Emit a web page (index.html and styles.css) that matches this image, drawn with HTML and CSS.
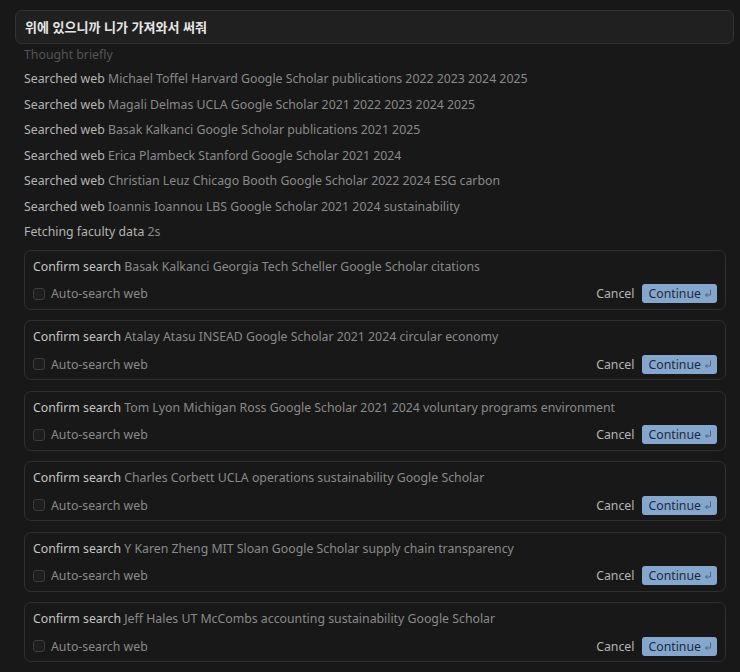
FILE: index.html
```html
<!DOCTYPE html>
<html lang="ko">
<head>
  <meta charset="UTF-8" />
  <meta name="viewport" content="width=device-width, initial-scale=1.0"/>
  <title>Agent log</title>
  <link rel="stylesheet" href="styles.css">
</head>
<body>

  <div class="chat">
    <div class="prompt">위에 있으니까 니가 가져와서 써줘</div>

    <div class="steps">
      <div class="step dim">Thought briefly</div>
      <div class="step"><b>Searched web</b> Michael Toffel Harvard Google Scholar publications 2022 2023 2024 2025</div>
      <div class="step"><b>Searched web</b> Magali Delmas UCLA Google Scholar 2021 2022 2023 2024 2025</div>
      <div class="step"><b>Searched web</b> Basak Kalkanci Google Scholar publications 2021 2025</div>
      <div class="step"><b>Searched web</b> Erica Plambeck Stanford Google Scholar 2021 2024</div>
      <div class="step"><b>Searched web</b> Christian Leuz Chicago Booth Google Scholar 2022 2024 ESG carbon</div>
      <div class="step"><b>Searched web</b> Ioannis Ioannou LBS Google Scholar 2021 2024 sustainability</div>
      <div class="step"><b>Fetching faculty data</b> 2s</div>
    </div>

    <div class="confirms">
      <div class="card">
        <div class="card-title"><b>Confirm search</b> Basak Kalkanci Georgia Tech Scheller Google Scholar citations</div>
        <div class="card-row">
          <label class="auto"><span class="box"></span>Auto-search web</label>
          <button class="cancel">Cancel</button>
          <button class="continue">Continue <svg width="8" height="9" viewBox="0 0 8 9"><path d="M6.5 0.5v5.5H1.5M3.5 4l-2 2 2 2" fill="none" stroke="currentColor" stroke-width="0.9"/></svg></button>
        </div>
      </div>

      <div class="card">
        <div class="card-title"><b>Confirm search</b> Atalay Atasu INSEAD Google Scholar 2021 2024 circular economy</div>
        <div class="card-row">
          <label class="auto"><span class="box"></span>Auto-search web</label>
          <button class="cancel">Cancel</button>
          <button class="continue">Continue <svg width="8" height="9" viewBox="0 0 8 9"><path d="M6.5 0.5v5.5H1.5M3.5 4l-2 2 2 2" fill="none" stroke="currentColor" stroke-width="0.9"/></svg></button>
        </div>
      </div>

      <div class="card">
        <div class="card-title"><b>Confirm search</b> Tom Lyon Michigan Ross Google Scholar 2021 2024 voluntary programs environment</div>
        <div class="card-row">
          <label class="auto"><span class="box"></span>Auto-search web</label>
          <button class="cancel">Cancel</button>
          <button class="continue">Continue <svg width="8" height="9" viewBox="0 0 8 9"><path d="M6.5 0.5v5.5H1.5M3.5 4l-2 2 2 2" fill="none" stroke="currentColor" stroke-width="0.9"/></svg></button>
        </div>
      </div>

      <div class="card">
        <div class="card-title"><b>Confirm search</b> Charles Corbett UCLA operations sustainability Google Scholar</div>
        <div class="card-row">
          <label class="auto"><span class="box"></span>Auto-search web</label>
          <button class="cancel">Cancel</button>
          <button class="continue">Continue <svg width="8" height="9" viewBox="0 0 8 9"><path d="M6.5 0.5v5.5H1.5M3.5 4l-2 2 2 2" fill="none" stroke="currentColor" stroke-width="0.9"/></svg></button>
        </div>
      </div>

      <div class="card">
        <div class="card-title"><b>Confirm search</b> Y Karen Zheng MIT Sloan Google Scholar supply chain transparency</div>
        <div class="card-row">
          <label class="auto"><span class="box"></span>Auto-search web</label>
          <button class="cancel">Cancel</button>
          <button class="continue">Continue <svg width="8" height="9" viewBox="0 0 8 9"><path d="M6.5 0.5v5.5H1.5M3.5 4l-2 2 2 2" fill="none" stroke="currentColor" stroke-width="0.9"/></svg></button>
        </div>
      </div>

      <div class="card">
        <div class="card-title"><b>Confirm search</b> Jeff Hales UT McCombs accounting sustainability Google Scholar</div>
        <div class="card-row">
          <label class="auto"><span class="box"></span>Auto-search web</label>
          <button class="cancel">Cancel</button>
          <button class="continue">Continue <svg width="8" height="9" viewBox="0 0 8 9"><path d="M6.5 0.5v5.5H1.5M3.5 4l-2 2 2 2" fill="none" stroke="currentColor" stroke-width="0.9"/></svg></button>
        </div>
      </div>
    </div>
  </div>

</body>
</html>
```

FILE: styles.css
```css
body {
  margin: 0;
  background: #181818;
  color: #8a8a8a;
  font-family: "Noto Sans", "Noto Sans CJK KR", sans-serif;
  font-size: 12.3px;
}

.chat {
  padding: 10px 6px 0 15px;
}

.prompt {
  height: 32px;
  line-height: 32px;
  padding: 0 9px;
  background: #202020;
  border: 1px solid #333;
  border-radius: 7px;
  color: #e6e6e6;
  font-weight: 600;
  font-size: 13px;
  font-family: "Noto Sans CJK KR", sans-serif;
}

.steps {
  padding: 0 9px;
}

.step {
  height: 25.5px;
  line-height: 25.5px;
  white-space: nowrap;
}

.step:first-child {
  height: 22px;
  line-height: 21px;
}

.step b {
  font-weight: 400;
  color: #b4b4b4;
}

.dim {
  color: #555;
}

.confirms {
  display: flex;
  flex-direction: column;
  gap: 10.5px;
  padding: 5px 8px 0 9px;
}

.card {
  height: 58px;
  border: 1px solid #2f2f2f;
  border-radius: 7px;
  padding: 0 8px;
}

.card-title {
  height: 32px;
  line-height: 32px;
  white-space: nowrap;
}

.card-title b {
  font-weight: 400;
  color: #c4c4c4;
}

.card-row {
  display: flex;
  align-items: center;
  height: 22px;
}

.auto {
  display: flex;
  align-items: center;
  gap: 6px;
  flex: 1;
  color: #8a8a8a;
}

.box {
  width: 12px;
  height: 12px;
  border: 1px solid #3c3c3c;
  border-radius: 3px;
  background: #1e1e1e;
  box-sizing: border-box;
}

button {
  font: inherit;
  border: none;
  cursor: pointer;
}

.cancel {
  background: none;
  color: #b4b4b4;
  padding: 0 8px 0 0;
}

.continue {
  display: flex;
  align-items: center;
  gap: 3px;
  height: 19px;
  padding: 0 5px 0 6px;
  background: #86a7cd;
  color: #1b2b3f;
  border-radius: 3px;
}

.continue svg {
  color: #4a5d76;
}
```
